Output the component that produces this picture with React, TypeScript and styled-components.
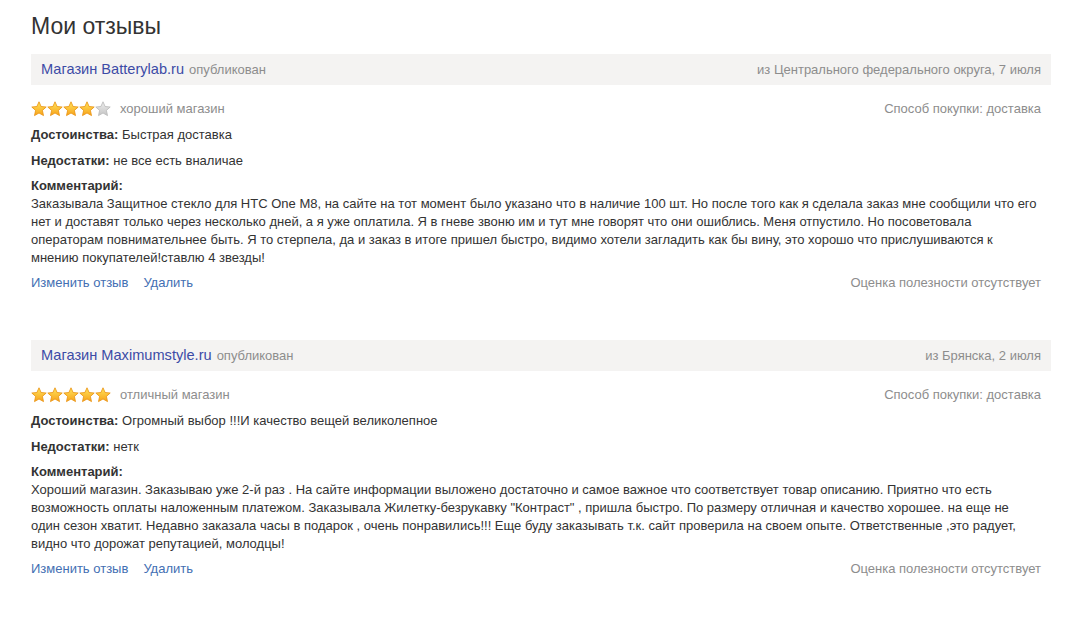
import styled, { createGlobalStyle } from 'styled-components';

interface Review {
  shop: string;
  region: string;
  rating: number;
  summary: string;
  pros: string;
  cons: string;
  comment: string;
}

const reviews: Review[] = [
  {
    shop: 'Магазин Batterylab.ru',
    region: 'из Центрального федерального округа, 7 июля',
    rating: 4,
    summary: 'хороший магазин',
    pros: 'Быстрая доставка',
    cons: 'не все есть вналичае',
    comment:
      'Заказывала Защитное стекло для HTC One M8, на сайте на тот момент было указано что в наличие 100 шт. Но после того как я сделала заказ мне сообщили что его нет и доставят только через несколько дней, а я уже оплатила. Я в гневе звоню им и тут мне говорят что они ошиблись. Меня отпустило. Но посоветовала операторам повнимательнее быть. Я то стерпела, да и заказ в итоге пришел быстро, видимо хотели загладить как бы вину, это хорошо что прислушиваются к мнению покупателей!ставлю 4 звезды!',
  },
  {
    shop: 'Магазин Maximumstyle.ru',
    region: 'из Брянска, 2 июля',
    rating: 5,
    summary: 'отличный магазин',
    pros: 'Огромный выбор !!!И качество вещей великолепное',
    cons: 'нетк',
    comment:
      'Хороший магазин. Заказываю уже 2-й раз . На сайте информации выложено достаточно и самое важное что соответствует товар описанию. Приятно что есть возможность оплаты наложенным платежом. Заказывала Жилетку-безрукавку "Контраст" , пришла быстро. По размеру отличная и качество хорошее. на еще не один сезон хватит. Недавно заказала часы в подарок , очень понравились!!! Еще буду заказывать т.к. сайт проверила на своем опыте. Ответственные ,это радует, видно что дорожат репутацией, молодцы!',
  },
];

const Star = ({ filled }: { filled: boolean }) => (
  <svg width="16" height="16" viewBox="0 0 16 16">
    <defs>
      <linearGradient id="sg" x1="0" y1="0" x2="0" y2="1">
        <stop offset="0" stopColor="#ffe45c" />
        <stop offset="1" stopColor="#f7a21a" />
      </linearGradient>
      <linearGradient id="sgg" x1="0" y1="0" x2="0" y2="1">
        <stop offset="0" stopColor="#eeeeee" />
        <stop offset="1" stopColor="#c4c4c4" />
      </linearGradient>
    </defs>
    <path
      d="M8 0.8 L10.1 5.5 L15.2 6 L11.4 9.4 L12.5 14.6 L8 12 L3.5 14.6 L4.6 9.4 L0.8 6 L5.9 5.5 Z"
      fill={filled ? 'url(#sg)' : 'url(#sgg)'}
      stroke={filled ? '#e8900e' : '#b8b8b8'}
      strokeWidth="0.8"
      strokeLinejoin="round"
    />
  </svg>
);

const App = () => (
  <>
    <GlobalStyle />
    <Page>
      <Title>Мои отзывы</Title>
      {reviews.map((r) => (
        <Card key={r.shop}>
          <CardHeader>
            <div>
              <ShopLink>{r.shop}</ShopLink>
              <Muted>опубликован</Muted>
            </div>
            <Muted>{r.region}</Muted>
          </CardHeader>
          <Body>
            <SpreadRow>
              <Rating>
                <Stars>
                  {[1, 2, 3, 4, 5].map((i) => (
                    <Star key={i} filled={i <= r.rating} />
                  ))}
                </Stars>
                <Summary>{r.summary}</Summary>
              </Rating>
              <Muted>Способ покупки: доставка</Muted>
            </SpreadRow>
            <Line>
              <b>Достоинства:</b> {r.pros}
            </Line>
            <Line>
              <b>Недостатки:</b> {r.cons}
            </Line>
            <Comment>
              <b>Комментарий:</b>
              <p>{r.comment}</p>
            </Comment>
            <FooterRow>
              <Actions>
                <ActionLink>Изменить отзыв</ActionLink>
                <ActionLink>Удалить</ActionLink>
              </Actions>
              <Muted>Оценка полезности отсутствует</Muted>
            </FooterRow>
          </Body>
        </Card>
      ))}
    </Page>
  </>
);

export default App;

const GlobalStyle = createGlobalStyle`
  body {
    margin: 0;
    background: #fff;
    font-family: Arial, "Liberation Sans", sans-serif;
    font-size: 13px;
    line-height: 18px;
    color: #333;
  }
`;

const Page = styled.div`
  padding: 12px 25px 0 31px;
`;

const Title = styled.h1`
  margin: 0 0 14px;
  font-size: 23px;
  line-height: 28px;
  font-weight: normal;
  color: #333;
`;

const Card = styled.div`
  margin-bottom: 48px;
`;

const CardHeader = styled.div`
  display: flex;
  justify-content: space-between;
  align-items: center;
  height: 31px;
  padding: 0 10px;
  background: #f4f3f2;
`;

const ShopLink = styled.a`
  font-size: 14.6px;
  color: #3c4ba6;
  margin-right: 5px;
  cursor: pointer;
`;

const Muted = styled.span`
  color: #8d8d8d;
  font-size: 13px;
`;

const Body = styled.div`
  padding: 15px 10px 0 0;
`;

const SpreadRow = styled.div`
  display: flex;
  justify-content: space-between;
  align-items: center;
`;

const FooterRow = styled(SpreadRow)`
  margin-top: 7px;
`;

const Rating = styled.div`
  display: flex;
  align-items: center;
`;

const Stars = styled.div`
  display: flex;
  margin-right: 9px;
`;

const Summary = styled.span`
  color: #8d8d8d;
`;

const Line = styled.div`
  margin-top: 8px;
  b {
    font-weight: bold;
  }
`;

const Comment = styled.div`
  margin-top: 7px;
  p {
    margin: 0;
  }
`;

const Actions = styled.div`
  display: flex;
  gap: 15px;
`;

const ActionLink = styled.a`
  color: #436fb3;
  cursor: pointer;
`;
